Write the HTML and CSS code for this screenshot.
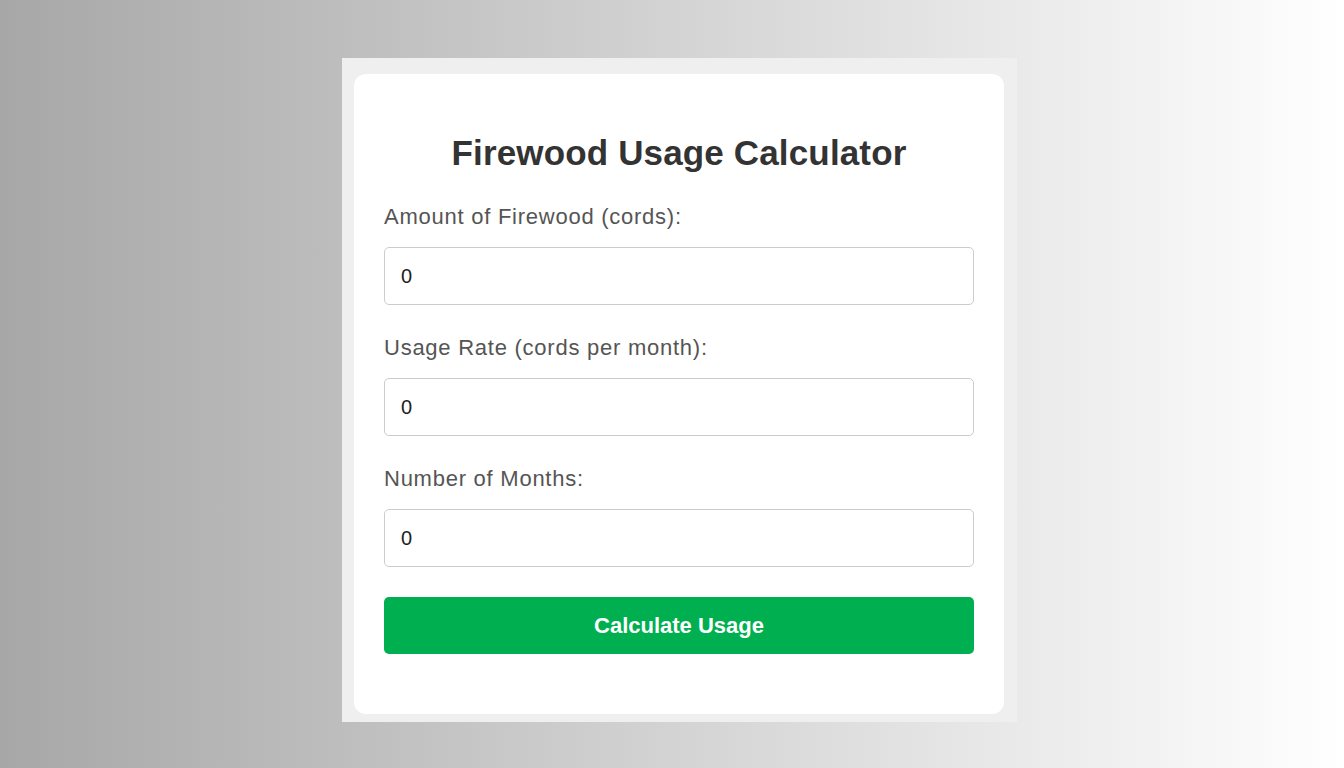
FILE: index.html
```html
<!DOCTYPE html>
<html lang="en">
<head>
<meta charset="utf-8">
<title>Firewood Usage Calculator</title>
<link rel="stylesheet" href="styles.css">
</head>
<body>
<div class="frame">
  <div class="card">
    <h2 class="title">Firewood Usage Calculator</h2>
    <form class="form">
      <label class="label" for="amount">Amount of Firewood (cords):</label>
      <input class="field" id="amount" type="number" value="0">
      <label class="label" for="rate">Usage Rate (cords per month):</label>
      <input class="field" id="rate" type="number" value="0">
      <label class="label" for="months">Number of Months:</label>
      <input class="field" id="months" type="number" value="0">
      <button class="btn" type="button">Calculate Usage</button>
    </form>
  </div>
</div>
</body>
</html>
```

FILE: styles.css
```css
html, body {
  margin: 0;
  padding: 0;
}
body {
  width: 1344px;
  height: 768px;
  overflow: hidden;
  background: linear-gradient(to right, #a7a7a7 0%, #ffffff 100%);
  font-family: "Liberation Sans", Arial, sans-serif;
}
.frame {
  width: 650px;
  margin: 58px 0 0 342px;
  padding: 16px 13px 8px 12px;
  background: #efefef;
}
.card {
  background: #ffffff;
  border-radius: 12px;
  padding: 30px;
  box-sizing: border-box;
  height: 640px;
}
.title {
  margin: 29px 0 31px;
  font-size: 35px;
  font-weight: bold;
  color: #333333;
  text-align: center;
  line-height: 40px;
  letter-spacing: 0.15px;
}
.form {
  display: flex;
  flex-direction: column;
}
.label {
  font-size: 22px;
  line-height: 25px;
  color: #555555;
  margin-bottom: 18px;
  letter-spacing: 0.75px;
}
.field {
  height: 58px;
  box-sizing: border-box;
  border: 1px solid #cccccc;
  border-radius: 5px;
  padding: 0 16px;
  font-family: "Liberation Sans", Arial, sans-serif;
  font-size: 20px;
  color: #222222;
  margin-bottom: 30px;
  background: #ffffff;
}
.btn {
  height: 57px;
  border: none;
  border-radius: 5px;
  background: #00b050;
  color: #ffffff;
  font-family: "Liberation Sans", Arial, sans-serif;
  font-size: 22px;
  font-weight: bold;
  cursor: pointer;
}
```
